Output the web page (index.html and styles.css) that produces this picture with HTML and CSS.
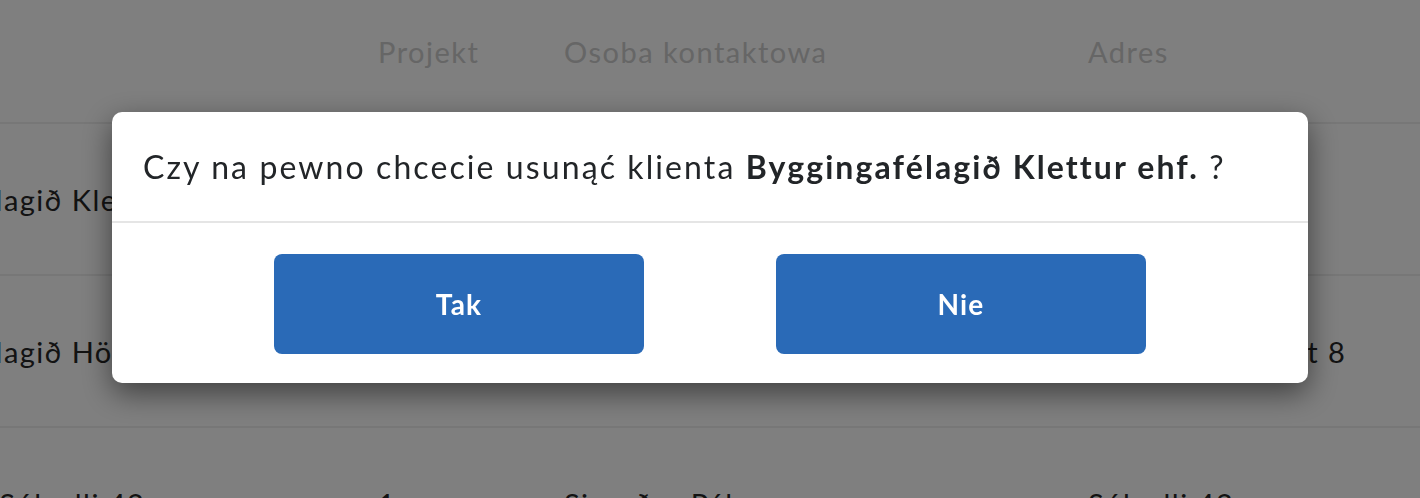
FILE: index.html
```html
<!DOCTYPE html>
<html lang="pl">
<head>
<meta charset="utf-8">
<title>Klienci</title>
<link rel="stylesheet" href="styles.css">
</head>
<body>
<div class="page">
  <div class="table">
    <div class="row head">
      <div class="cell name">Nazwa</div>
      <div class="cell proj">Projekt</div>
      <div class="cell contact">Osoba kontaktowa</div>
      <div class="cell addr">Adres</div>
    </div>
    <div class="row">
      <div class="cell name">Byggingafélagið Klettur ehf.</div>
      <div class="cell proj">2</div>
      <div class="cell contact">Jón Guðmundsson</div>
      <div class="cell addr">Skeifan 11</div>
    </div>
    <div class="row">
      <div class="cell name">Byggingafélagið Höfði ehf.</div>
      <div class="cell proj">3</div>
      <div class="cell contact">Anna Sigurðardóttir</div>
      <div class="cell addr">Suðurlandsbraut 8</div>
    </div>
    <div class="row">
      <div class="cell name">Húsfélagið Sólvalli 42</div>
      <div class="cell proj">1</div>
      <div class="cell contact">Sigurður Pálsson</div>
      <div class="cell addr">Sólvalli 42</div>
    </div>
  </div>
</div>
<div class="overlay">
  <div class="modal">
    <div class="modal-head"><p class="question">Czy na pewno chcecie usunąć klienta <b>Byggingafélagið Klettur ehf.</b> ?</p></div>
    <div class="modal-foot">
      <button class="btn">Tak</button>
      <button class="btn">Nie</button>
    </div>
  </div>
</div>
</body>
</html>
```
FILE: styles.css
```css
html, body {
  margin: 0;
  padding: 0;
  width: 1420px;
  height: 498px;
  overflow: hidden;
  background: #fff;
  font-family: "Lato", "Liberation Sans", sans-serif;
}

.page {
  width: 1420px;
  height: 498px;
  overflow: hidden;
}

.table {
  margin-left: -160px;
  width: 1640px;
}

.row {
  display: grid;
  grid-template-columns: 538px 186px 524px 1fr;
  align-items: center;
  height: 150px;
  border-bottom: 2px solid #eeeeee;
  font-size: 29px;
  letter-spacing: 1.5px;
  color: #262626;
}

.row.head {
  height: 122px;
  align-items: start;
  color: #cccccc;
}

.row.head .cell {
  padding-top: 34px;
}

.cell {
  white-space: nowrap;
}

.overlay {
  position: fixed;
  inset: 0;
  background: rgba(0, 0, 0, 0.5);
  display: flex;
  justify-content: center;
  align-items: flex-start;
  padding-top: 112px;
}

.modal {
  width: 1196px;
  background: #fff;
  border-radius: 10px;
  box-shadow: 0 10px 30px rgba(0, 0, 0, 0.5);
  overflow: hidden;
}

.modal-head {
  height: 109px;
  display: flex;
  align-items: center;
  padding: 0 31px;
  border-bottom: 2px solid #e5e5e5;
}

.question {
  margin: 0;
  font-size: 32px;
  letter-spacing: 2.1px;
  color: #222528;
  white-space: nowrap;
}

.question b {
  font-weight: 700;
  letter-spacing: 2.1px;
}

.modal-foot {
  display: flex;
  justify-content: space-between;
  padding: 31px 162px 29px;
}

.btn {
  width: 370px;
  height: 100px;
  border: none;
  border-radius: 8px;
  background: #2a6ab7;
  color: #fff;
  font-family: "Lato", "Liberation Sans", sans-serif;
  font-weight: 700;
  font-size: 28px;
  letter-spacing: 1.2px;
}
```
